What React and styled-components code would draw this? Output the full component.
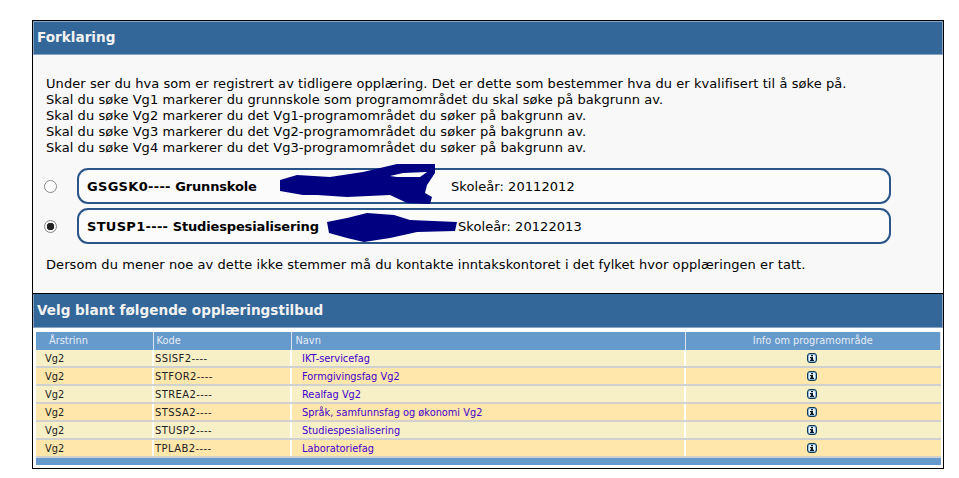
import React from "react";
import styled, { createGlobalStyle } from "styled-components";

const GlobalStyle = createGlobalStyle`
    html, body {
        margin: 0;
        padding: 0;
        background: #fff;
    }
    body {
        font-family: "DejaVu Sans", Verdana, sans-serif;
        color: #000;
    }
`;

const programmes = [
    { code: "SSISF2----", name: "IKT-servicefag" },
    { code: "STFOR2----", name: "Formgivingsfag Vg2" },
    { code: "STREA2----", name: "Realfag Vg2" },
    { code: "STSSA2----", name: "Språk, samfunnsfag og økonomi Vg2" },
    { code: "STUSP2----", name: "Studiespesialisering" },
    { code: "TPLAB2----", name: "Laboratoriefag" },
];

const InfoIcon = () => (
    <svg width="10" height="10" viewBox="0 0 10 10">
        <rect x="0.5" y="0.5" width="9" height="9" rx="2.5" fill="#8fbbdd" stroke="#12344f" />
        <rect x="2" y="2" width="6" height="6" rx="1" fill="#eef5fa" />
        <path d="M4 2h2v1.3H4zM3 4h3v2.7h1V8H3V6.7h1V5.3H3z" fill="#0c1a26" />
    </svg>
);

function App() {
    return (
        <Page>
            <GlobalStyle />
            <Frame>
                <PanelHeader>Forklaring</PanelHeader>
                <Body>
                    <Intro>
                        Under ser du hva som er registrert av tidligere opplæring. Det er dette som bestemmer hva du er kvalifisert til å søke på.
                        <br />
                        Skal du søke Vg1 markerer du grunnskole som programområdet du skal søke på bakgrunn av.
                        <br />
                        Skal du søke Vg2 markerer du det Vg1-programområdet du søker på bakgrunn av.
                        <br />
                        Skal du søke Vg3 markerer du det Vg2-programområdet du søker på bakgrunn av.
                        <br />
                        Skal du søke Vg4 markerer du det Vg3-programområdet du søker på bakgrunn av.
                    </Intro>
                    <Choice>
                        <Radio type="radio" name="grunnlag" />
                        <ChoiceBox>
                            <Strong><Code>GSGSK0----</Code> Grunnskole</Strong>
                            <Year $left={372}>Skoleår: 20112012</Year>
                            <Scribble width="156" height="46" viewBox="0 0 156 46" $left={201} $top={-10}>
                                <path
                                    d="M0 20 L17 15 L50 17 L83 12 L117 4 L155 4 L155 13 L147 25 L145 33 L152 37 L150 44 L127 43 L110 35 L67 37 L37 35 L23 35 L0 31 Z M110 16 L123 13 L147 12 L140 17 L117 17 Z"
                                    fill="#000080"
                                    fillRule="evenodd"
                                />
                            </Scribble>
                        </ChoiceBox>
                    </Choice>
                    <Choice>
                        <Radio type="radio" name="grunnlag" defaultChecked />
                        <ChoiceBox>
                            <Strong><Code>STUSP1----</Code> Studiespesialisering</Strong>
                            <Year $left={379}>Skoleår: 20122013</Year>
                            <Scribble width="131" height="33" viewBox="0 0 131 33" $left={248} $top={0}>
                                <path
                                    d="M0 12 L20 8 L40 3 L67 5 L83 10 L130 12 L128 21 L90 22 L63 28 L37 32 L20 28 L2 23 Z"
                                    fill="#000080"
                                />
                            </Scribble>
                        </ChoiceBox>
                    </Choice>
                    <Note>
                        Dersom du mener noe av dette ikke stemmer må du kontakte inntakskontoret i det fylket hvor opplæringen er tatt.
                    </Note>
                </Body>
                <PanelHeader $divided>Velg blant følgende opplæringstilbud</PanelHeader>
                <TableWrap>
                    <Table>
                        <colgroup>
                            <col width="117" />
                            <col width="138" />
                            <col width="394" />
                            <col />
                        </colgroup>
                        <thead>
                            <tr>
                                <Th $indent={13}>Årstrinn</Th>
                                <Th $indent={3}>Kode</Th>
                                <Th $indent={4}>Navn</Th>
                                <Th $center>Info om programområde</Th>
                            </tr>
                        </thead>
                        <tbody>
                            {programmes.map((programme, i) => (
                                <Row key={programme.code} $odd={i % 2 === 1}>
                                    <Td $indent={9}>Vg2</Td>
                                    <Td $indent={1} $wide>{programme.code}</Td>
                                    <Td $indent={10}>
                                        <ProgrammeLink href="#">{programme.name}</ProgrammeLink>
                                    </Td>
                                    <IconCell>
                                        <InfoIcon />
                                    </IconCell>
                                </Row>
                            ))}
                        </tbody>
                    </Table>
                    <TableFooter />
                </TableWrap>
            </Frame>
        </Page>
    );
}

const Page = styled.div`
    width: 959px;
    height: 478px;
    padding: 20px 15px 0 32px;
    box-sizing: border-box;
    overflow: hidden;
`;

const Frame = styled.div`
    width: 912px;
    height: 449px;
    box-sizing: border-box;
    border: 1px solid #000;
    background: #fff;
`;

const PanelHeader = styled.div`
    height: 34px;
    box-sizing: border-box;
    padding: 0 0 2px 3px;
    display: flex;
    align-items: center;
    background: #336699;
    border: 1px solid #8aa4c4;
    border-top-color: ${(props) => (props.$divided ? "#336699" : "#8aa4c4")};
    color: #f2f2f2;
    font-size: 13.6px;
    font-weight: bold;
`;

const Body = styled.div`
    height: 239px;
    box-sizing: border-box;
    padding-top: 21px;
    background: #f8f8f8;
    border-bottom: 1px solid #000;
    font-size: 13px;
    letter-spacing: 0.066px;
`;

const Intro = styled.div`
    padding-left: 13px;
    line-height: 16px;
    height: 92px;
    white-space: nowrap;
`;

const Choice = styled.div`
    display: flex;
    align-items: center;
    height: 36px;
    margin-bottom: 4px;
    padding-left: 11px;
`;

const Radio = styled.input`
    appearance: none;
    width: 13px;
    height: 13px;
    margin: 0 20px 0 0;
    border: 1px solid #888;
    border-radius: 50%;
    background: #fff;
    box-sizing: border-box;
    flex: none;
    &:checked {
        background: radial-gradient(circle, #222 0 3.5px, #f4f4f4 4px);
    }
`;

const ChoiceBox = styled.div`
    position: relative;
    width: 814px;
    height: 36px;
    box-sizing: border-box;
    border: 2px solid #2a5588;
    border-radius: 11px;
    background: #fbfbfb;
    display: flex;
    align-items: center;
    padding-left: 8px;
`;

const Strong = styled.span`
    font-weight: bold;
    letter-spacing: -0.15px;
    white-space: nowrap;
`;

const Code = styled.span`
    letter-spacing: 0.3px;
`;

const Year = styled.span`
    position: absolute;
    left: ${(props) => props.$left}px;
    white-space: nowrap;
`;

const Scribble = styled.svg`
    position: absolute;
    left: ${(props) => props.$left}px;
    top: ${(props) => props.$top}px;
`;

const Note = styled.div`
    padding: 9px 0 0 13px;
    line-height: 16px;
    white-space: nowrap;
`;

const TableWrap = styled.div`
    padding: 4px 2px 0 3px;
`;

const Table = styled.table`
    width: 905px;
    table-layout: fixed;
    border-collapse: collapse;
    font-size: 9.8px;
`;

const Th = styled.th`
    height: 17px;
    padding: 0 0 1px ${(props) => props.$indent || 0}px;
    background: #6699cc;
    border-right: 1px solid #dbe6f0;
    color: #e6eef6;
    font-weight: normal;
    text-align: ${(props) => (props.$center ? "center" : "left")};
`;

const Row = styled.tr`
    background: ${(props) => (props.$odd ? "#ffe6aa" : "#f7efc6")};
`;

const Td = styled.td`
    height: 16px;
    padding: 0 0 0 ${(props) => props.$indent}px;
    border-right: 2px solid #fff;
    border-bottom: 2px solid #d0d0d0;
    color: #222;
    font-size: ${(props) => (props.$wide ? "10px" : "inherit")};
    letter-spacing: ${(props) => (props.$wide ? "0.4px" : "normal")};
    white-space: nowrap;
`;

const IconCell = styled.td`
    height: 16px;
    padding: 0 2px 0 0;
    border-bottom: 2px solid #d0d0d0;
    text-align: center;
    line-height: 0;
`;

const ProgrammeLink = styled.a`
    color: #4400cc;
    text-decoration: none;
`;

const TableFooter = styled.div`
    height: 7px;
    background: #6699cc;
`;

export default App;
